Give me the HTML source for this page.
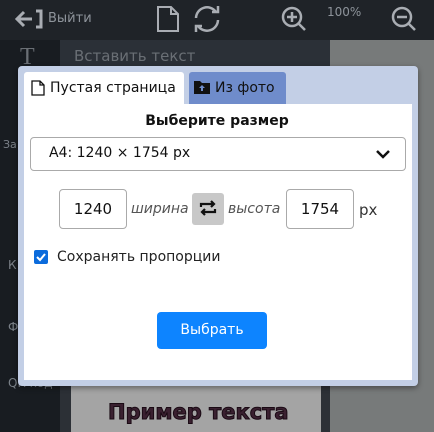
<!DOCTYPE html>
<html><head><meta charset="utf-8"><style>
*{margin:0;padding:0;box-sizing:border-box}
body{width:434px;height:432px;overflow:hidden;position:relative;background:#6e7171;font-family:"DejaVu Sans","Liberation Sans",sans-serif}
.a{position:absolute}
</style></head><body>
<div class="a" style="left:0;top:0;width:434px;height:40px;background:#1f2328"></div>
<div class="a" style="left:0;top:40px;width:330px;height:30px;background:#2b3037"></div>
<div class="a" style="left:0;top:40px;width:60px;height:392px;background:#181c21"></div>
<div class="a" style="left:330px;top:40px;width:104px;height:392px;background:#777a7a"></div>
<div class="a" style="left:60px;top:70px;width:270px;height:362px;background:#2c3036"></div>
<div class="a" style="left:71px;top:380px;width:250px;height:52px;background:#a4a4a4"></div>
<div class="a" style="left:108px;top:400px;font:bold 21px 'DejaVu Sans',sans-serif;color:#3a2030;-webkit-text-stroke:1px #1a0a14">Пример текста</div>
<svg class="a" style="left:14px;top:8px" width="32" height="22" viewBox="0 0 32 22"><path d="M4 11h14M10 4l-7 7 7 7" stroke="#a9adb3" stroke-width="3" fill="none"/><path d="M22 3h5v16h-5" stroke="#a9adb3" stroke-width="3" fill="none"/></svg>
<div class="a" style="left:48px;top:11px;font-size:13px;color:#8e949b">Выйти</div>
<svg class="a" style="left:155px;top:5px" width="26" height="28"><path d="M3 2h13l7 7v17H3z M16 2v7h7" stroke="#a9adb3" stroke-width="2" fill="none"/></svg>
<svg class="a" style="left:190px;top:4px" width="34" height="30"><path d="M6 14a11 11 0 0 1 20-6M28 16a11 11 0 0 1-20 6" stroke="#a9adb3" stroke-width="2.5" fill="none"/><path d="M22 8h6V2M12 22H6v6" stroke="#a9adb3" stroke-width="2.5" fill="none"/></svg>
<svg class="a" style="left:280px;top:5px" width="28" height="28"><circle cx="12" cy="12" r="9" stroke="#a9adb3" stroke-width="2.5" fill="none"/><path d="M18 18l7 7M12 7v10M7 12h10" stroke="#a9adb3" stroke-width="2.5"/></svg>
<div class="a" style="left:327px;top:5px;font-size:12px;color:#8e949b">100%</div>
<svg class="a" style="left:390px;top:5px" width="28" height="28"><circle cx="12" cy="12" r="9" stroke="#a9adb3" stroke-width="2.5" fill="none"/><path d="M18 18l7 7M7 12h10" stroke="#a9adb3" stroke-width="2.5"/></svg>
<div class="a" style="left:20px;top:44px;font:24px 'Liberation Serif',serif;color:#6a6f75">T</div>
<div class="a" style="left:74px;top:47px;font-size:15px;color:#6a6f75">Вставить текст</div>
<div class="a" style="left:3px;top:138px;font-size:11px;color:#7a8088">За</div>
<div class="a" style="left:8px;top:258px;font-size:12px;color:#7a8088">К</div>
<div class="a" style="left:8px;top:320px;font-size:12px;color:#7a8088">Ф</div>
<div class="a" style="left:8px;top:376px;font-size:12px;color:#7a8088">QR-код</div>
<div class="a" style="left:18px;top:66px;width:400px;height:320px;background:#c3cfe6;border-radius:4px;box-shadow:0 2px 6px rgba(0,0,0,.4)"></div>
<div class="a" style="left:24px;top:72px;width:160px;height:34px;background:#fff;border-radius:3px 3px 0 0"></div>
<div class="a" style="left:189px;top:72px;width:97px;height:32px;background:#6f8ccb;border-radius:3px 3px 0 0"></div>
<div class="a" style="left:24px;top:104px;width:388px;height:276px;background:#fff"></div>
<svg class="a" style="left:31px;top:80px" width="14" height="16"><path d="M1 1h8l4 4v10H1z M9 1v4h4" stroke="#111" stroke-width="1.3" fill="none"/></svg>
<div class="a" style="left:50px;top:80px;font-size:14px;color:#111">Пустая страница</div>
<svg class="a" style="left:194px;top:80px" width="16" height="14"><path d="M0 1h6l2 2h8v11H0z" fill="#111"/><path d="M8 5l-3 3h2v3h2V8h2z" fill="#6f8ccb"/></svg>
<div class="a" style="left:215px;top:80px;font-size:14px;color:#111">Из фото</div>
<div class="a" style="left:0;top:113px;width:434px;text-align:center;font-weight:bold;font-size:14px;color:#111">Выберите размер</div>
<div class="a" style="left:30px;top:137px;width:376px;height:34px;border:1px solid #aaa;border-radius:4px"></div>
<div class="a" style="left:49px;top:145px;font-size:14px;color:#111">A4: 1240 × 1754 px</div>
<svg class="a" style="left:376px;top:150px" width="14" height="10"><path d="M1 1l6 6 6-6" stroke="#111" stroke-width="2.5" fill="none"/></svg>
<div class="a" style="left:59px;top:189px;width:68px;height:40px;border:1px solid #aaa;border-radius:4px;text-align:center;line-height:38px;font-size:15px;color:#111">1240</div>
<div class="a" style="left:131px;top:201px;font-size:14px;font-style:italic;color:#555">ширина</div>
<div class="a" style="left:192px;top:193px;width:32px;height:32px;background:#c8c8c8;border-radius:3px"></div>
<svg class="a" style="left:199px;top:200px" width="18" height="16"><path d="M2 7V4h13M12 1l3 3-3 3M16 9v3H3M6 9l-3 3 3 3" stroke="#111" stroke-width="2.2" fill="none"/></svg>
<div class="a" style="left:228px;top:201px;font-size:14px;font-style:italic;color:#555">высота</div>
<div class="a" style="left:286px;top:189px;width:68px;height:40px;border:1px solid #aaa;border-radius:4px;text-align:center;line-height:38px;font-size:15px;color:#111">1754</div>
<div class="a" style="left:359px;top:201px;font-size:15px;color:#333">px</div>
<div class="a" style="left:34px;top:250px;width:14px;height:14px;background:#0b6bdc;border-radius:2px"></div>
<svg class="a" style="left:34px;top:250px" width="14" height="14"><path d="M3 7l3 3 5-6" stroke="#fff" stroke-width="2" fill="none"/></svg>
<div class="a" style="left:57px;top:249px;font-size:14px;color:#222">Сохранять пропорции</div>
<div class="a" style="left:157px;top:312px;width:110px;height:37px;background:#0d84ff;border-radius:4px;color:#fff;text-align:center;line-height:37px;font-size:14px">Выбрать</div>
</body></html>
